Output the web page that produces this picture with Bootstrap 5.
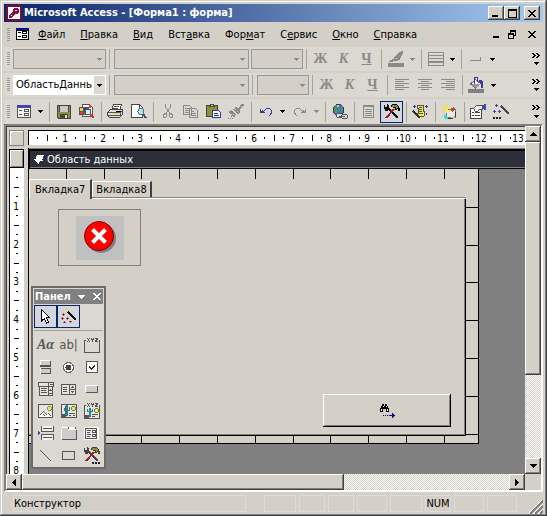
<!DOCTYPE html>
<html lang="ru">
<head>
<meta charset="utf-8">
<meta name="viewport" content="width=device-width, initial-scale=1">
<title>Microsoft Access - [Форма1 : форма]</title>
<link href="https://cdn.jsdelivr.net/npm/bootstrap@5.3.0/dist/css/bootstrap.min.css" rel="stylesheet">
<style>
:root{--face:#d4d0c8;--bar:#dbd8d1;--navy:#0a246a}
body{font:11px/14px "DejaVu Sans Condensed","Noto Sans",sans-serif;color:#000;background:var(--face);overflow:hidden}
button,select,input{font:inherit;color:inherit;border:0;border-radius:0;background:transparent;padding:0}
svg{display:block;flex:none;shape-rendering:crispEdges}
.app{padding:4px 4px 2px;background:var(--face);box-shadow:inset -1px -1px #404040,inset 1px 1px #d4d0c8,inset -2px -2px #808080,inset 2px 2px #fff}
.titlebar{height:18px;background:linear-gradient(90deg,#0a246a,#a6caf0);color:#fff;font-weight:bold;padding:0 3px 0 2px}
.titlebar h1{font:bold 11px/16px "DejaVu Sans Condensed","Noto Sans",sans-serif;margin:0 0 0 2px}
.raised{background:var(--face);box-shadow:inset -1px -1px #404040,inset 1px 1px #fff,inset -2px -2px #808080}
.winbtn{width:16px;height:14px;display:flex;align-items:center;justify-content:center;color:#000}
.menubar{height:25px;padding:0 3px}
.menubar nav{gap:15px;margin-left:9px}
.menubar nav a{color:#000;text-decoration:none}
.menubar u{text-underline-offset:1px}
.grip{width:3px;height:14px;margin:0 2px 0 3px;background:repeating-linear-gradient(#999 0 1px,transparent 1px 2px);flex:none}
.tbar{height:24px;margin-bottom:2px;background:var(--bar);border-radius:2px;padding-right:1px}
.tbar.last-bar{height:25px;margin-bottom:0}
.tbtn{width:23px;height:22px;display:flex;align-items:center;justify-content:center;flex:none}
.tbtn.picked{background:#d3d6dc;box-shadow:inset 0 0 0 1px var(--navy)}
.drop{width:11px;height:22px;display:flex;align-items:center;justify-content:center;flex:none}
.off{color:#8c8a86}
.vsep{width:1px;height:20px;background:#a6a39d;margin:0 2px 0 3px;flex:none}
.combo{height:20px;border:1px solid #999;background:var(--face);color:#000;flex:none;position:relative}
.combo select{appearance:none;display:block;width:100%;height:18px;padding-left:2px;line-height:18px;opacity:1}
.combo svg{position:absolute;right:3px;top:8px;pointer-events:none;color:#8c8a86}
.combo.live{background:#fff;border-color:#fff}
.combo.live select{background:linear-gradient(#dbd8d1,#dbd8d1) right/11px 100% no-repeat;padding-right:13px;overflow:hidden;text-overflow:clip}
.combo.live svg{color:#000}
.w-style{width:93px;margin-left:1px}
.w-font{width:135px;margin-left:2px}
.w-size{width:52px;margin-left:2px}
.glyph{font:bold 14px/20px "Liberation Serif",serif;color:#8c8a86}
.glyph.label-tool{color:#555}
.field-tool{font-size:13px;color:#555}
.more{width:12px;height:22px;display:flex;flex-direction:column;align-items:center;justify-content:space-evenly}
.titlebar,.menubar,.tbar,.status{flex:none}
.work{min-height:0;border:2px solid;border-color:#808080 #fff #fff #808080;box-shadow:inset 1px 1px #404040;display:grid;grid-template:22px minmax(0,1fr) 16px / 22px minmax(0,1fr) 16px;background:var(--face)}
.hrule{margin-top:4px;height:15px;background:#fff;border:solid #000;border-width:1px 0 0 1px;overflow:hidden}
.knob{border:1px solid #808080;box-shadow:inset 1px 1px #fff;background:var(--face);flex:none}
.knob.top-knob{margin:4px 4px 0 3px;height:16px}
.vcol{padding:1px 4px 0 3px;min-height:0}
.vcol .knob{height:19px;border-color:#000;box-shadow:inset 1px 1px #fff,inset -1px -1px #808080}
.vrule{background:#fff;border-left:1px solid #000;overflow:hidden;min-height:0}
.rtext{font:10px "DejaVu Sans Condensed","Noto Sans",sans-serif;text-anchor:middle}
.canvas{background:#808080;border-left:1px solid #000;position:relative;overflow:hidden;grid-column:2;grid-row:2}
.section-bar{margin-top:1px;height:20px;background:#2c2f38;color:#fff;border:solid #000;border-width:2px 0 1px 1px;box-shadow:inset 0 -1px #808080;padding-left:4px;gap:3px}
.section-bar span{line-height:16px}
.sheet{width:450px;height:275px;position:relative;background:var(--face);border:solid #000;border-width:0 1px 1px 0}
.tabset{position:absolute;left:0;top:10px;width:437px;height:257px;background:var(--face)}
.tabhead{height:18px;align-items:flex-end}
.tabhead button{height:16px;padding:0 3px 0 3px;border:solid;border-color:#fff #404040 #fff #fff;border-width:1px 2px 0 1px;border-top-left-radius:2px;background:var(--face)}
.tabhead button.active{height:20px;padding:0 5px;margin-bottom:-2px;position:relative;z-index:1}
.tabpane-box{height:239px;background:var(--face);box-shadow:inset 0 1px #808080,inset 0 2px #fff,inset -1px -1px #000,inset -2px -2px #808080}
.imgframe{position:absolute;left:29px;top:40px;width:83px;height:57px;border:1px solid #808080;display:flex;align-items:center;justify-content:center}
.imgframe svg{shape-rendering:auto}
.findbtn{position:absolute;left:294px;top:225px;width:128px;height:33px;display:flex;align-items:center;justify-content:center;box-shadow:inset -1px -1px #000,inset 1px 1px #fff,inset -2px -2px #808080}
.scroll{background:repeating-conic-gradient(#fff 0 25%,#d4d0c8 0 50%) 0 0/2px 2px}
.arrowbtn{width:16px;height:16px;display:flex;align-items:center;justify-content:center;flex:none}
.vthumb{flex:0 1 67%}
.hthumb{flex:0 0 62%}
.vscroll{grid-column:3;grid-row:1/3}
.hscroll{grid-column:1/3;grid-row:3}
.status{height:22px;padding:3px 26px 2px 9px;gap:3px;position:relative}
.cell{height:17px;border:1px solid #dfdcd6;line-height:15px;flex:0 0 30px;text-align:center}
.cell.wide{flex:1 1 auto;margin-right:15px;text-align:left}
.cell.first{flex-basis:32px}.cell.slim{flex-basis:26px}
.sizer{position:absolute;right:0;bottom:0}
.toolbox{position:absolute;left:2px;top:138px;width:75px;border:2px solid #6b6b6b;background:var(--bar);padding:1px}
.toolbox header{height:15px;background:#808080;color:#fff;font-weight:bold;line-height:14px;padding:0 2px 0 1px}
.tools{display:grid;grid-template-columns:repeat(3,23px);grid-template-rows:23px 6px;grid-auto-rows:22px;padding-top:1px}
.tools hr{grid-column:1/4;margin:2px 0 3px;border:0;border-top:1px solid #a6a39d;opacity:1}
.tools .tbtn{height:100%}
</style>
<script src="https://cdn.jsdelivr.net/npm/bootstrap@5.3.0/dist/js/bootstrap.bundle.min.js"></script>
</head>
<body>
<svg width="0" height="0" class="position-absolute" aria-hidden="true">
 <symbol id="dn" viewBox="0 0 5 3"><path fill="currentColor" d="M0 0h5v1H0zM1 1h3v1H1zM2 2h1v1H2z"/></symbol>
 <symbol id="close" viewBox="0 0 8 7"><path fill="currentColor" d="M0 0h2v1H0zM6 0h2v1H6zM1 1h2v1H1zM5 1h2v1H5zM2 2h4v1H2zM3 3h2v1H3zM2 4h4v1H2zM1 5h2v1H1zM5 5h2v1H5zM0 6h2v1H0zM6 6h2v1H6z"/></symbol>
 <symbol id="more" viewBox="0 0 8 5"><path fill="currentColor" d="M0 0h2v1H0zM4 0h2v1H4zM1 1h2v1H1zM5 1h2v1H5zM2 2h2v1H2zM6 2h2v1H6zM1 3h2v1H1zM5 3h2v1H5zM0 4h2v1H0zM4 4h2v1H4z"/></symbol>
 <symbol id="hammer" viewBox="0 0 16 15"><path stroke="currentColor" stroke-width="2" d="M5 5l9 9"/><path fill="currentColor" d="M0 1h1v2h2V1h2v4H4v2H1V5H0zM3 0h1v1H3zM8 0h5v1h1v1h1v2h1v3h-2V5h-1v1h-2V4H9V3H7V1h1z"/><path stroke="#a01c2c" stroke-width="2" d="M2 14l8-9"/><path fill="#8c8c28" d="M8 1h5v1h1v2h-1v1h-1V3H8z"/></symbol>
</svg>

<div class="app vh-100 d-flex flex-column">
 <header class="titlebar d-flex align-items-center">
  <svg width="16" height="16" viewBox="0 0 16 16"><path fill="#7b0a3a" d="M0 0h16v16H0z"/><path fill="#fff" d="M2 2h12v12H2z"/><path fill="#8b1040" d="M8 3h4v1h1v4h-1v1H9v1H8v1H7v1H6v1H3v-3h1V9h1V8h1V7h1V4h1z"/><path fill="#fff" d="M9 5h2v1H9zM5 10h1v1H5z"/></svg>
  <h1 class="flex-grow-1 text-nowrap">Microsoft Access - [Форма1 : форма]</h1>
  <button class="winbtn raised" aria-label="Свернуть"><svg width="8" height="7" viewBox="0 0 8 7"><path d="M0 5h6v2H0z"/></svg></button>
  <button class="winbtn raised" aria-label="Развернуть"><svg width="9" height="9" viewBox="0 0 9 9"><path fill-rule="evenodd" d="M0 0h9v9H0zM1 2v6h7V2z"/></svg></button>
  <button class="winbtn raised ms-1" aria-label="Закрыть"><svg width="8" height="7"><use href="#close"/></svg></button>
 </header>

 <div class="menubar d-flex align-items-center">
  <span class="grip ms-0"></span>
  <svg class="ms-1" width="13" height="13" viewBox="0 0 13 13"><path d="M0 0h13v12H0z"/><path fill="#fff" d="M1 3h11v8H1z"/><path fill="#0a0a90" d="M0 0h13v2H0z"/><path d="M2 4h3v1H2zM2 8h3v1H2zM6 3h5v3H6zM6 7h5v3H6z"/><path fill="#fff" d="M7 4h3v1H7zM7 8h3v1H7z"/></svg>
  <nav class="d-flex flex-grow-1">
   <a href="#"><u>Ф</u>айл</a><a href="#"><u>П</u>равка</a><a href="#"><u>В</u>ид</a><a href="#">Вст<u>а</u>вка</a><a href="#">Фор<u>м</u>ат</a><a href="#">С<u>е</u>рвис</a><a href="#"><u>О</u>кно</a><a href="#"><u>С</u>правка</a>
  </nav>
  <button class="winbtn" aria-label="Свернуть форму"><svg width="8" height="7" viewBox="0 0 8 7"><path d="M1 5h6v2H1z"/></svg></button>
  <button class="winbtn" aria-label="Восстановить форму"><svg width="8" height="9" viewBox="0 0 8 9"><path d="M2 0h6v6H6V5h1V2H3v1H2zM0 3h6v6H0zM1 5v3h4V5z" fill-rule="evenodd"/></svg></button>
  <button class="winbtn ms-1" aria-label="Закрыть форму"><svg width="8" height="7"><use href="#close"/></svg></button>
 </div>

 <div class="tbar d-flex align-items-center" role="toolbar" aria-label="Границы">
  <span class="grip"></span>
  <div class="combo w-style"><select disabled aria-label="Объект"><option></option></select><svg width="5" height="3"><use href="#dn"/></svg></div><span class="vsep"></span>
  <div class="combo w-font"><select disabled aria-label="Шрифт"><option></option></select><svg width="5" height="3"><use href="#dn"/></svg></div>
  <div class="combo w-size"><select disabled aria-label="Размер"><option></option></select><svg width="5" height="3"><use href="#dn"/></svg></div><span class="vsep"></span>
  <button class="tbtn glyph">Ж</button><button class="tbtn glyph fst-italic">К</button><button class="tbtn glyph text-decoration-underline">Ч</button><span class="vsep"></span>
  <button class="tbtn off" aria-label="Цвет линии"><svg width="17" height="16" viewBox="0 0 17 16"><path fill="currentColor" d="M1 12h16v4H1zM2 10h1V9h2V8h2v1h1v1H6v1H2zM8 5h1V4h1V3h1V2h1V1h2V0h2v3h-1v2h-1v2h-1v2h-2v1H8V9H7V6h1z"/><path fill="#dbd8d1" d="M9 7h1v1H9z"/></svg></button><button class="drop off" aria-label="Ещё"><svg width="5" height="3"><use href="#dn"/></svg></button><span class="vsep"></span>
  <button class="tbtn off" aria-label="Толщина"><svg width="16" height="14" viewBox="0 0 16 14"><path fill="currentColor" fill-rule="evenodd" d="M0 0h16v14H0zM1 1v2h14V1zM1 4v2h14V4zM1 7v2h14V7zM1 11v2h14v-2z"/></svg></button><button class="drop" aria-label="Ещё"><svg width="5" height="3"><use href="#dn"/></svg></button><span class="vsep"></span>
  <button class="tbtn off" aria-label="Оформление"><svg width="12" height="5" viewBox="0 0 12 5"><path fill="currentColor" d="M0 3h10V0h1v4H0z"/></svg></button><button class="drop" aria-label="Ещё"><svg width="5" height="3"><use href="#dn"/></svg></button>
  <button class="more ms-auto" aria-label="Параметры"><svg width="8" height="5"><use href="#more"/></svg><svg width="5" height="3"><use href="#dn"/></svg></button>
 </div>

 <div class="tbar d-flex align-items-center" role="toolbar" aria-label="Форматирование">
  <span class="grip"></span>
  <div class="combo live w-style"><select aria-label="Объект"><option>ОбластьДанных</option></select><svg width="5" height="3"><use href="#dn"/></svg></div><span class="vsep"></span>
  <div class="combo w-font"><select disabled aria-label="Шрифт"><option></option></select><svg width="5" height="3"><use href="#dn"/></svg></div><span class="vsep"></span>
  <div class="combo w-size"><select disabled aria-label="Размер"><option></option></select><svg width="5" height="3"><use href="#dn"/></svg></div><span class="vsep"></span>
  <button class="tbtn glyph">Ж</button><button class="tbtn glyph fst-italic">К</button><button class="tbtn glyph text-decoration-underline">Ч</button><span class="vsep"></span>
  <button class="tbtn off" aria-label="По левому краю"><svg width="14" height="12" viewBox="0 0 14 12"><path fill="currentColor" d="M0 0h14v1H0zM0 2h9v1H0zM0 4h14v1H0zM0 6h9v1H0zM0 8h14v1H0zM0 10h9v1H0z"/></svg></button>
  <button class="tbtn off" aria-label="По центру"><svg width="14" height="12" viewBox="0 0 14 12"><path fill="currentColor" d="M0 0h14v1H0zM3 2h8v1H3zM0 4h14v1H0zM3 6h8v1H3zM0 8h14v1H0zM3 10h8v1H3z"/></svg></button>
  <button class="tbtn off" aria-label="По правому краю"><svg width="14" height="12" viewBox="0 0 14 12"><path fill="currentColor" d="M0 0h14v1H0zM5 2h9v1H5zM0 4h14v1H0zM5 6h9v1H5zM0 8h14v1H0zM5 10h9v1H5z"/></svg></button><span class="vsep"></span>
  <button class="tbtn" aria-label="Цвет заливки"><svg width="17" height="16" viewBox="0 0 17 16"><path fill="#808080" d="M0 12h16v4H0z"/><path fill="#fff" stroke="#666" d="M7.500 2.500l5 4-5 4.500-5-4z"/><path fill="#999" d="M3 7h9l-4 4z"/><path fill="none" stroke="#33a" d="M6.500 7V.500h3V4"/><path fill="#3a3aa0" d="M11 3h3v1h1v7h-2V7h-1V5h-1z"/></svg></button><button class="drop" aria-label="Ещё"><svg width="5" height="3"><use href="#dn"/></svg></button>
  <button class="more ms-auto" aria-label="Параметры"><svg width="8" height="5"><use href="#more"/></svg><svg width="5" height="3"><use href="#dn"/></svg></button>
 </div>

 <div class="tbar last-bar d-flex align-items-center" role="toolbar" aria-label="Конструктор форм">
  <span class="grip"></span>
  <button class="tbtn" aria-label="Вид"><svg width="14" height="13" viewBox="0 0 14 13"><path fill="#555" d="M0 0h14v13H0z"/><path fill="#f4f4f4" d="M1 3h12v9H1z"/><path fill="#44a" d="M0 0h14v3H0z"/><path fill="#555" d="M2 5h3v1H2zM2 9h3v1H2zM7 4h5v3H7zM7 8h5v3H7z"/><path fill="#fff" d="M8 5h3v1H8zM8 9h3v1H8z"/></svg></button><button class="drop" aria-label="Ещё"><svg width="5" height="3"><use href="#dn"/></svg></button><span class="vsep"></span>
  <button class="tbtn" aria-label="Сохранить"><svg width="14" height="14" viewBox="0 0 14 14"><path fill="#444" d="M0 0h14v14H1v-1H0z"/><path fill="#8f8f38" d="M1 1h1v6h10V1h1v12H2v-1H1z"/><path fill="#c9c9c9" d="M3 1h8v6H3z"/><path fill="#444" d="M3 9h8v4H3z"/><path fill="#ddd" d="M8 10h2v3H8z"/></svg></button>
  <button class="tbtn" aria-label="Поиск файлов"><svg width="16" height="15" viewBox="0 0 16 15"><path fill="#fff" stroke="#555" d="M3.500.500h7l3 3v9h-10z"/><path fill="#555" d="M0 3h10v8H0z"/><path fill="#ec3" d="M1 4h3v3H1z"/><path fill="#33b" d="M5 4h3v3H5z"/><path fill="#e33" d="M1 8h3v2H1zM10 1h2v3h-2z"/><path fill="#383" d="M5 8h3v2H5z"/><circle cx="9" cy="8" r="3" fill="#c8eef0" stroke="#555"/><path stroke="#c33" stroke-width="2" d="M11 10l4 4"/></svg></button><span class="vsep"></span>
  <button class="tbtn" aria-label="Печать"><svg width="17" height="15" viewBox="0 0 17 15"><path fill="#fff" stroke="#444" d="M4.500 6.500l2-6h8l-2 6z"/><path stroke="#555" d="M7 2.500h5M6 4.500h5"/><path fill="#ddd" stroke="#444" d="M.500 8.500l3-3h12v5l-3 3H2.500l-2-2z"/><path stroke="#555" d="M1 8.500h12l3-2M1 11.500h12M13.500 9v4"/><path fill="#e8e020" d="M7 9h4v1H7z"/></svg></button>
  <button class="tbtn" aria-label="Просмотр"><svg width="16" height="15" viewBox="0 0 16 15"><path fill="#fff" stroke="#444" d="M.500.500h8l3 3v10H.500z"/><path fill="none" stroke="#444" d="M8.500 1v3h3"/><circle cx="10" cy="7.500" r="3" fill="#9ee" stroke="#666"/><path stroke="#357" stroke-width="2" d="M12 10l3 4"/></svg></button><span class="vsep"></span>
  <button class="tbtn off" aria-label="Вырезать"><svg width="10" height="15" viewBox="0 0 10 15"><path fill="none" stroke="currentColor" d="M2.500 0v3l4 6M7.500 0v3l-4 6"/><path fill="none" stroke="currentColor" d="M.500 10.500h1v-1h2v3l-1 1h-2zM9.500 10.500h-1v-1h-2v3l1 1h2z"/></svg></button>
  <button class="tbtn off" aria-label="Копировать"><svg width="16" height="14" viewBox="0 0 16 14"><path fill="#dbd8d1" stroke="currentColor" d="M.500.500h6l2 2v7h-8zM6.500 3.500h6l2 2v7h-8z"/><path stroke="currentColor" d="M2 3.500h4M2 5.500h4M2 7.500h4M8 6.500h3M8 8.500h5M8 10.500h5"/></svg></button>
  <button class="tbtn" aria-label="Вставить"><svg width="16" height="15" viewBox="0 0 16 15"><path fill="#8f8f38" stroke="#444" d="M.500 1.500h11v11H.500z"/><path fill="#ddd" stroke="#444" d="M3.500 2.500v-1h1v-1h3v1h1v1z"/><path fill="#fff" stroke="#33a" d="M6.500 6.500h6l2 2v5h-8z"/><path stroke="#33a" d="M8 9.500h4M8 11.500h5"/></svg></button>
  <button class="tbtn off" aria-label="Формат по образцу"><svg width="17" height="15" viewBox="0 0 17 15"><path fill="currentColor" d="M13 0h3v2h-1v1h-1v1h-1v1h-2V3h1V1h1zM7 3h2v1h2v1h1v4h-1v1H9V9H8V8H7V7H6V6H5V5h2zM3 6h1v1h1v1h1v1h1v1h1v1H7v2H5v-1H4v1H3v-2h1v-1H2V9H1V7h2z"/><path fill="#dbd8d1" d="M7 5h1v1H7zM9 7h1v1H9zM5 10h1v1H5zM13 2h1v1h-1z"/><path fill="currentColor" d="M0 14h1v1H0zM2 14h1v1H2zM4 14h1v1H4z"/></svg></button><span class="vsep"></span>
  <button class="tbtn" aria-label="Отменить"><svg width="12" height="8" viewBox="0 0 12 8"><path fill="#3a3a9a" d="M0 1h1v2h1V2h1v2h2v1H0zM3 3h1V2h1V1h1V0h4v1h1v1h1v4h-1v1h-1v1H9V7h1V5h1V2h-1V1H6v1H5v1H4v1H3z"/></svg></button><button class="drop" aria-label="Ещё"><svg width="5" height="3"><use href="#dn"/></svg></button>
  <button class="tbtn off" aria-label="Вернуть"><svg width="12" height="8" viewBox="0 0 12 8"><path fill="currentColor" d="M12 1h-1v2h-1V2H9v2H7v1h5zM9 3H8V2H7V1H6V0H2v1H1v1H0v4h1v1h1v1h1V7H2V5H1V2h1V1h4v1h1v1h1v1h1z"/></svg></button><button class="drop off" aria-label="Ещё"><svg width="5" height="3"><use href="#dn"/></svg></button><span class="vsep"></span>
  <button class="tbtn" aria-label="Гиперссылка"><svg width="16" height="16" viewBox="0 0 16 16"><circle cx="6.500" cy="6" r="5.500" fill="#4a6fd8" stroke="#335"/><path fill="#4a9a4a" d="M3 1h4v2H5v2h3v2H5v2H3V6H2V3h1zM9 2h2v5H9z"/><path fill="#9cf" d="M5 1h2v2H5z"/><rect x="4.500" y="9.500" width="6" height="4" rx="2" fill="#ddd" stroke="#555"/><rect x="9.500" y="10.500" width="6" height="4" rx="2" fill="#ddd" stroke="#555"/><path stroke="#555" d="M7 12.500h6"/></svg></button><span class="vsep"></span>
  <button class="tbtn off" aria-label="Список полей"><svg width="11" height="13" viewBox="0 0 11 13"><path fill="none" stroke="currentColor" d="M.500.500h10v12H.500z"/><path stroke="currentColor" d="M0 1.500h11M2 4.500h7M2 6.500h7M2 8.500h7M2 10.500h7"/></svg></button>
  <button class="tbtn picked" aria-label="Панель элементов"><svg width="16" height="15"><use href="#hammer"/></svg></button><span class="vsep"></span>
  <button class="tbtn" aria-label="Автоформат"><svg width="17" height="16" viewBox="0 0 17 16"><path fill="#33b" d="M2 1h1v3H2zM1 2h3v1H1zM14 1h1v3h-1zM13 2h3v1h-3zM14 9h1v2h-1z"/><path fill="#f2e64a" stroke="#554" d="M5.500 1.500h6v6h1v4l-1 1h-6v-3h1v-5h-1z"/><path stroke="#554" d="M7 3.500h3M7 5.500h3M7 7.500h3M7 9.500h4"/><path stroke="#333" stroke-width="2" d="M1 7l7 7"/></svg></button><span class="vsep"></span>
  <button class="tbtn" aria-label="Программа"><svg width="16" height="16" viewBox="0 0 16 16"><path fill="#e8e8e8" stroke="#777" d="M4.500 5.500h9v8h-9z"/><path fill="#f4e840" d="M4 0h1v3l3-2-2 3h3v1H6l2 3-3-2v3H4V6L1 8l2-3H0V4h3L1 1l3 2z"/><path fill="#b44" d="M9 4l3-1 1 2-3 3-1-1z"/><path fill="#2cd8e0" d="M2 11h3v2h1v2H3v-1H2z"/><path fill="#e8c030" d="M11 12h2v2h-4v-1h2z"/><path fill="#335" d="M13 8h1v5h-1zM6 14h5v1H6z"/></svg></button><span class="vsep"></span>
  <button class="tbtn" aria-label="Свойства"><svg width="17" height="15" viewBox="0 0 17 15"><path fill="#fff" stroke="#444" d="M.500 4.500h11v10H.500z"/><path fill="#444" d="M2 8h2v1H2zM2 11h2v1H2zM5 8h5v1H5zM5 11h5v1H5z"/><path fill="#eee" stroke="#555" d="M3.500 4.500l3-3h6v4h-3l-2 2h-2z"/><path fill="#3a50a0" d="M12 1h2V0h2v6h-2V5h-2z"/></svg></button>
  <button class="tbtn" aria-label="Построить"><svg width="17" height="15" viewBox="0 0 17 15"><path fill="#44a" d="M3 0h1v3H3zM2 1h3v1H2zM1 6h1v3H1zM0 7h3v1H0zM6 6h1v3H6zM5 7h3v1H5z"/><path stroke="#444" stroke-width="2" d="M7 1l9 9"/><path fill="#f0e890" d="M6 0h2v2H6z"/><path fill="#222" d="M0 13h2v2H0zM3 13h2v2H3zM6 13h2v2H6z"/></svg></button>
  <button class="more ms-auto" aria-label="Параметры"><svg width="8" height="5"><use href="#more"/></svg><svg width="5" height="3"><use href="#dn"/></svg></button>
 </div>

 <main class="work flex-grow-1">
  <div class="knob top-knob"></div>
  <div class="hrule"><svg id="hr" width="100%" height="14"></svg></div>
  <div class="vcol d-flex flex-column">
   <div class="knob"></div>
   <div class="vrule flex-grow-1"><svg id="vr" width="15" height="100%"></svg></div>
  </div>
  <section class="canvas">
   <div class="section-bar d-flex align-items-center">
    <svg width="10" height="9" viewBox="0 0 10 9"><path fill="#fff" d="M3 0h7v1H9v3H8v1h1v1H6v1H5v2H4V8H3V7H2V6H1V5H0V4h2V1h1z"/></svg><span>Область данных</span>
   </div>
   <div class="sheet">
    <svg id="grid" width="449" height="274"></svg>
    <div class="tabset">
     <div class="tabhead d-flex" role="tablist"><button class="active" role="tab">Вкладка7</button><button role="tab">Вкладка8</button></div>
     <div class="tabpane-box" role="tabpanel"></div>
    </div>
    <div class="imgframe"><svg width="48" height="44" viewBox="0 0 48 44"><path fill="#c0c0c0" d="M0 0h48v44H0z"/><circle cx="25" cy="22" r="15" fill="#808080"/><circle cx="23" cy="20" r="14.500" fill="#f00" stroke="#800000"/><path stroke="#fff" stroke-width="4" d="M16.500 13.500l13 13M29.500 13.500l-13 13"/></svg></div>
    <button class="findbtn" aria-label="Найти далее"><svg width="15" height="14" viewBox="0 0 15 14"><path d="M2 0h2v2h1V0h2v2h1v2h1v4H6V5H3v3H0V4h1V2h1z"/><path fill="#fff" d="M3 2h1v1H3zM6 2h1v1H6zM1 5h1v2H1zM7 5h1v2H7z"/><path fill="#000080" d="M3 11h1v1H3zM5 11h1v1H5zM7 11h1v1H7zM9 11h3V9h1v1h1v1h1v1h-1v1h-1v1h-1v-2H9z"/></svg></button>
   </div>
   <aside class="toolbox">
    <header class="d-flex align-items-center"><span class="flex-grow-1">Панел</span><svg width="7" height="4" viewBox="0 0 7 4"><path fill="#fff" d="M0 0h7v1H0zM1 1h5v1H1zM2 2h3v1H2zM3 3h1v1H3z"/></svg><button class="ms-2" aria-label="Закрыть панель"><svg width="8" height="7"><use href="#close"/></svg></button></header>
    <div class="tools">
     <button class="tbtn picked" aria-label="Выбор объектов"><svg width="10" height="15" viewBox="0 0 10 15"><path fill="#fff" stroke="#000" d="M.500.500l8 8h-3l2 4.500-2 1-2-4.500-3 2.500z"/></svg></button>
     <button class="tbtn picked" aria-label="Мастера"><svg width="16" height="14" viewBox="0 0 16 14"><path stroke="#111" stroke-width="2" d="M6 1l9 9"/><path fill="#e8e020" d="M5 0h2v2H5z"/><path fill="#a55" d="M2 3h1v1H2zM1 4h1v1H1zM3 4h1v1H3zM2 5h1v1H2zM0 8h1v1H0zM1 7h1v1H1zM2 8h1v1H2zM1 9h1v1H1zM5 8h1v1H5zM6 7h1v1H6zM7 8h1v1H7zM6 9h1v1H6zM9 12h1v1H9zM8 11h1v1H8zM10 11h1v1h-1zM2 12h1v1H2zM3 11h1v1H3zM4 12h1v1H4z"/><path fill="#800000" d="M2 4h1v1H2zM1 8h1v1H1zM6 8h1v1H6zM9 11h1v1H9zM3 12h1v1H3z"/></svg></button>
     <hr>
     <button class="tbtn glyph label-tool fst-italic" aria-label="Надпись">Aα</button>
     <button class="tbtn field-tool" aria-label="Поле">ab|</button>
     <button class="tbtn" aria-label="Группа"><svg width="16" height="16" viewBox="0 0 16 16"><path fill="none" stroke="#555" d="M2 3.500H.500v12h15v-12H15"/><path fill="#555" d="M3 1h1v1h1V1h1v1H5v2h1v1H5V4H4v1H3V4h1V2H3zM7 1h1v1h1V1h1v2H9v2H8V3H7zM11 1h3v2h-1v1h1v1h-3V3h1V2h-1z"/></svg></button>
     <button class="tbtn" aria-label="Выключатель"><svg width="11" height="14" viewBox="0 0 11 14"><path fill="#555" d="M0 1h11v6H0zM0 8h11v6H0z"/><path fill="#fff" d="M0 0h10v5H0zM0 8h1v6H0z"/><path fill="#ccc" d="M1 1h9v4H1zM1 9h9v4H1z"/></svg></button>
     <button class="tbtn" aria-label="Переключатель"><svg width="13" height="13" viewBox="0 0 13 13" shape-rendering="auto"><circle cx="6.500" cy="6.500" r="5" fill="#fff" stroke="#666" stroke-width="1"/><circle cx="6.500" cy="6.500" r="3" fill="#444"/></svg></button>
     <button class="tbtn" aria-label="Флажок"><svg width="12" height="12" viewBox="0 0 12 12"><path fill="#fff" stroke="#555" d="M.500.500h11v11H.500z"/><path fill="#222" d="M3 5h1v1h1v1h1V6h1V5h1V4h1v2H8v1H7v1H6v1H5V8H4V7H3z"/></svg></button>
     <button class="tbtn" aria-label="Поле со списком"><svg width="16" height="14" viewBox="0 0 16 14"><path fill="#e6e4de" stroke="#555" d="M.500.500h15v4H.500zM1.500 4.500h13v9h-13z"/><path fill="#555" d="M10 0h1v14h-1zM12 2h3v1h-3zM3 6h6v1H3zM3 8h5v1H3zM3 10h6v1H3zM12 7h1v1h1v1h-3V8h1zM11 11h3v1h-3z"/></svg></button>
     <button class="tbtn" aria-label="Список"><svg width="15" height="11" viewBox="0 0 15 11"><path fill="#e6e4de" stroke="#555" d="M.500.500h14v10H.500z"/><path fill="#555" d="M8 0h1v11H8zM2 3h4v1H2zM2 5h4v1H2zM2 7h4v1H2zM11 2h1v1h1v1h-3V3h1zM10 7h3v1h-1v1h-1V8h-1zM9 5h5v1H9z"/></svg></button>
     <button class="tbtn" aria-label="Кнопка"><svg width="13" height="8" viewBox="0 0 13 8"><path fill="#555" d="M1 1h12v7H1z"/><path fill="#fff" d="M0 0h12v7H0z"/><path fill="#ccc" d="M1 1h11v6H1z"/></svg></button>
     <button class="tbtn" aria-label="Рисунок"><svg width="15" height="14" viewBox="0 0 15 14"><path fill="#e6e4de" stroke="#555" d="M.500.500h14v13H.500z"/><path fill="#fff" d="M1 12l4-4 3 3 2-2 4 4H1z"/><path fill="#555" d="M5 7h1v1H5zM4 8h1v1H4zM6 8h1v1H6zM3 9h1v1H3zM7 9h1v1H7zM10 9h1v1h-1zM2 10h1v1H2zM8 10h1v1H8zM11 10h1v1h-1zM12 11h1v1h-1zM5 10h1v1H5zM6 11h1v1H6z"/><path fill="#888" d="M10 2h3v1h1v3h-1v1h-3V6H9V3h1z"/><path fill="#f0f020" d="M10 3h3v3h-3z"/></svg></button>
     <button class="tbtn" aria-label="Свободная рамка объекта"><svg width="16" height="14" viewBox="0 0 16 14"><path fill="#e6e4de" stroke="#555" d="M.500.500h15v13H.500z"/><path fill="#555" d="M1 10h4v3H1zM4 2h1v8H4zM8 9h6v1H8zM8 11h2v1H8zM12 11h2v1h-2z"/><path fill="#288" d="M5 1h2v11H5zM3 4h1v3H3zM8 3h1v4H8zM3 6h6v1H3z"/><path fill="#777" d="M11 2h3v1h1v3h-1v1h-3V6h-1V3h1z"/><path fill="#f0f020" d="M11 3h3v3h-3z"/></svg></button>
     <button class="tbtn" aria-label="Присоединенная рамка"><svg width="16" height="16" viewBox="0 0 16 16"><path fill="#e6e4de" d="M1 3h14v12H1z"/><path fill="none" stroke="#555" d="M2 2.500H.500v13h15v-13H15"/><path fill="#555" d="M3 0h1v1h1V0h1v1H5v2h1v1H5V3H4v1H3V3h1V1H3zM7 0h1v1h1V0h1v2H9v2H8V2H7zM11 0h3v2h-1v1h1v1h-3V2h1V1h-1zM1 12h4v3H1zM8 11h6v1H8zM8 13h3v1H8z"/><path fill="#288" d="M5 5h2v9H5zM3 6h1v3H3zM8 6h1v3H8zM3 8h6v1H3z"/><path fill="#777" d="M11 5h3v1h1v3h-1v1h-3V9h-1V6h1z"/><path fill="#f0f020" d="M11 6h3v3h-3z"/></svg></button>
     <button class="tbtn" aria-label="Разрыв страницы"><svg width="16" height="14" viewBox="0 0 16 14"><path fill="#f4f2ee" d="M4 0h11v5H4zM4 9h11v5H4z"/><path fill="#555" d="M3 0h1v5h11V0h1v6H3zM5 2h9v1H5zM3 8h13v6h-1V9H4v5H3zM5 11h9v1H5z"/><path fill="#44a" d="M0 5h1v1h1v2H1v1H0z"/></svg></button>
     <button class="tbtn" aria-label="Набор вкладок"><svg width="16" height="14" viewBox="0 0 16 14"><path fill="#555" d="M7 1h1v3H7zM14 1h1v3h1v10H1v-1h14z"/><path fill="#fff" d="M1 1h6v3H1zM8 1h6v3H8zM0 3h15v10H0z"/><path fill="#ccc" d="M1 2h6v2h8v9H1z"/></svg></button>
     <button class="tbtn" aria-label="Подчиненная форма"><svg width="15" height="13" viewBox="0 0 15 13"><path fill="#fff" d="M0 0h15v13H0z"/><path fill="#eee" stroke="#555" d="M1.500 1.500h11v10h-11z"/><path fill="#555" d="M3 3h4v1H3zM3 5h3v1H3zM3 7h4v1H3zM3 9h3v1H3zM8 3h4v3H8zM8 7h4v3H8z"/><path fill="#fff" d="M9 4h2v1H9zM9 8h2v1H9z"/></svg></button>
     <button class="tbtn" aria-label="Линия"><svg width="11" height="11" viewBox="0 0 11 11"><path stroke="#555" d="M0 0l11 11"/></svg></button>
     <button class="tbtn" aria-label="Прямоугольник"><svg width="13" height="9" viewBox="0 0 13 9"><path fill="none" stroke="#555" d="M.500.500h12v8H.500z"/></svg></button>
     <button class="tbtn" aria-label="Другие элементы"><svg width="16" height="17" viewBox="0 0 16 17" color="#444"><use href="#hammer" width="16" height="15"/><path fill="#dbd8d1" d="M7 14h9v3H7z"/><path fill="#222" d="M8 15h2v2H8zM11 15h2v2h-2zM14 15h2v2h-2z"/></svg></button>
    </div>
   </aside>
  </section>
  <div class="vscroll scroll d-flex flex-column">
   <button class="arrowbtn raised" aria-label="Вверх"><svg width="7" height="4" viewBox="0 0 7 4"><path d="M3 0h1v1H3zM2 1h3v1H2zM1 2h5v1H1zM0 3h7v1H0z"/></svg></button>
   <div class="vthumb raised"></div>
   <button class="arrowbtn raised mt-auto" aria-label="Вниз"><svg width="7" height="4" viewBox="0 0 7 4"><path d="M0 0h7v1H0zM1 1h5v1H1zM2 2h3v1H2zM3 3h1v1H3z"/></svg></button>
  </div>
  <div class="hscroll scroll d-flex">
   <button class="arrowbtn raised" aria-label="Влево"><svg width="4" height="7" viewBox="0 0 4 7"><path d="M3 0h1v7H3zM2 1h1v5H2zM1 2h1v3H1zM0 3h1v1H0z"/></svg></button>
   <div class="hthumb raised"></div>
   <button class="arrowbtn raised ms-auto" aria-label="Вправо"><svg width="4" height="7" viewBox="0 0 4 7"><path d="M0 0h1v7H0zM1 1h1v5H1zM2 2h1v3H2zM3 3h1v1H3z"/></svg></button>
  </div>
 </main>

 <footer class="status d-flex">
  <div class="cell wide">Конструктор</div><div class="cell first"></div><div class="cell slim"></div><div class="cell slim"></div><div class="cell"></div><div class="cell first"></div><div class="cell slim">NUM</div><div class="cell"></div><div class="cell"></div>
  <svg class="sizer" width="14" height="14" viewBox="0 0 14 14"><path stroke="#808080" stroke-width="2" d="M1 14L14 1M6 14l8-8M11 14l3-3"/><path stroke="#fff" d="M0 13L13 0M4 14L14 4M9 14l5-5"/></svg>
 </footer>
</div>
<script>
// One centimetre on the design surface, in pixels
const CM = 37.8;
const at = n => Math.round(n * CM);
const el = id => document.getElementById(id);

function drawRulers() {
  const w = el('hr').parentNode.clientWidth, t = el('vr').parentNode.clientHeight;
  let h = '', v = '';
  for (let n = 0; at(n) < w; n++) {
    const e = at(n + 1);
    h += `<path d="M${at(n + .25) - 1} 6h1v2h-1zM${at(n + .5) - 1} 4h1v6h-1zM${at(n + .75) - 1} 6h1v2h-1z"/>`;
    if (e + 3 < w) h += `<text class="rtext" x="${e - 2}" y="11">${n + 1}</text>`;
  }
  for (let n = 0; at(n) < t; n++) {
    const e = at(n + 1);
    v += `<path d="M6 ${at(n + .25)}h2v1h-2zM4 ${at(n + .5)}h5v1h-5zM6 ${at(n + .75)}h2v1h-2z"/>`;
    if (e + 2 < t) v += `<text class="rtext" x="6" y="${e + 4}">${n + 1}</text>`;
  }
  el('hr').innerHTML = h;
  el('vr').innerHTML = v;
}

let g = '';
for (let n = 1; n < 12; n++) g += `<path d="M${at(n) - 1} 0h1v274h-1z"/>`;
for (let n = 1; n < 8; n++) g += `<path d="M437 ${at(n)}h12v1h-12z"/>`;
el('grid').innerHTML = g;
drawRulers();
addEventListener('resize', drawRulers);
</script>
</body>
</html>
